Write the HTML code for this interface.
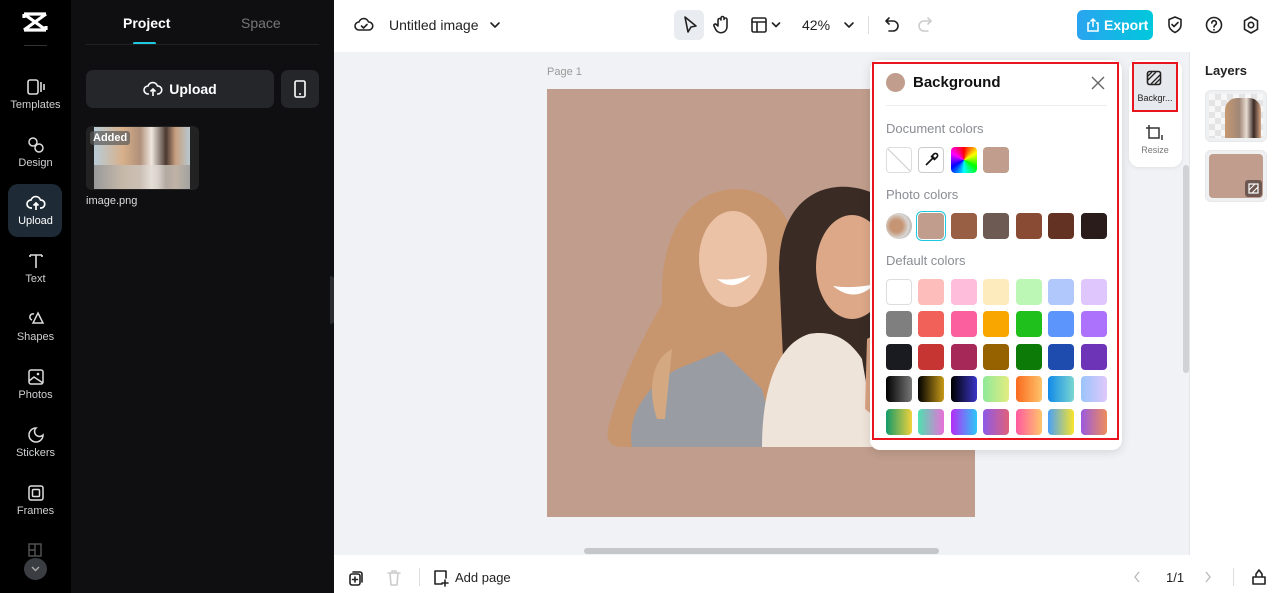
<!DOCTYPE html>
<html><head><meta charset="utf-8"><style>
*{box-sizing:border-box;margin:0;padding:0}
body{width:1280px;height:593px;overflow:hidden;font-family:"Liberation Sans",sans-serif;background:#fff;position:relative}
.abs{position:absolute}
.nav{left:0;top:0;width:71px;height:593px;background:#000}
.navi{position:absolute;left:0;width:71px;text-align:center;color:#cfd0d2;font-size:11px}
.navi svg{display:block;margin:0 auto 3px}
.panel{left:71px;top:0;width:263px;height:593px;background:#0f0f11}
.sw{position:absolute;width:26px;height:26px;border-radius:4px}
.ic{stroke:#222;fill:none;stroke-width:1.6;stroke-linecap:round;stroke-linejoin:round}
</style></head><body>
<div class="abs nav">
 <svg class="abs" style="left:22px;top:12px" width="26" height="20" viewBox="0 0 26 20"><path d="M2 2h22M2 18h22M2 2l22 16M24 2L2 18M2 2v4M24 14v4" stroke="#fff" stroke-width="3.2" fill="none"/></svg>
 <div class="abs" style="left:24px;top:45px;width:23px;height:1px;background:#333"></div>
 <div class="navi" style="top:78px"><svg width="20" height="18" viewBox="0 0 20 18"><rect x="2" y="2" width="10" height="14" rx="2" stroke="#ddd" stroke-width="1.6" fill="none"/><path d="M15 4v10M18 6v6" stroke="#ddd" stroke-width="1.6"/></svg>Templates</div>
 <div class="navi" style="top:136px"><svg width="20" height="18" viewBox="0 0 20 18"><circle cx="7" cy="6" r="4" stroke="#ddd" stroke-width="1.5" fill="none"/><circle cx="13" cy="12" r="4" stroke="#ddd" stroke-width="1.5" fill="none"/></svg>Design</div>
 <div class="abs" style="left:8px;top:184px;width:54px;height:53px;border-radius:10px;background:#1e2a36"></div>
 <div class="navi" style="top:194px;color:#fff"><svg width="20" height="18" viewBox="0 0 20 18"><path d="M6 14H5a4 4 0 010-8 5 5 0 019.5 0A4 4 0 0115 14h-1M10 9v7M7.5 11.5L10 9l2.5 2.5" stroke="#fff" stroke-width="1.7" fill="none"/></svg>Upload</div>
 <div class="navi" style="top:252px"><svg width="20" height="18" viewBox="0 0 20 18"><path d="M4 3h12M10 3v13M4 3v2M16 3v2" stroke="#ddd" stroke-width="1.6" fill="none"/></svg>Text</div>
 <div class="navi" style="top:310px"><svg width="20" height="18" viewBox="0 0 20 18"><path d="M8 4a3 3 0 10-2 6M12 3l5 10H7z" stroke="#ddd" stroke-width="1.5" fill="none"/></svg>Shapes</div>
 <div class="navi" style="top:368px"><svg width="20" height="18" viewBox="0 0 20 18"><rect x="3" y="2" width="14" height="14" rx="2" stroke="#ddd" stroke-width="1.5" fill="none"/><path d="M3 13l5-4 9 6" stroke="#ddd" stroke-width="1.5" fill="none"/><circle cx="12" cy="6" r="1.3" fill="#ddd"/></svg>Photos</div>
 <div class="navi" style="top:426px"><svg width="20" height="18" viewBox="0 0 20 18"><path d="M10 2a7 7 0 107 7 4 4 0 01-7-7z" stroke="#ddd" stroke-width="1.5" fill="none"/></svg>Stickers</div>
 <div class="navi" style="top:484px"><svg width="20" height="18" viewBox="0 0 20 18"><rect x="3" y="2" width="14" height="14" rx="2" stroke="#ddd" stroke-width="1.5" fill="none"/><rect x="6.5" y="5.5" width="7" height="7" rx="1" stroke="#ddd" stroke-width="1.5" fill="none"/></svg>Frames</div>
 <svg class="abs" style="left:28px;top:543px" width="14" height="14"><rect x="1" y="1" width="12" height="12" stroke="#555" stroke-width="1.4" fill="none"/><path d="M7 1v12M1 7h6" stroke="#555" stroke-width="1.4"/></svg>
 <div class="abs" style="left:24px;top:558px;width:23px;height:22px;border-radius:50%;background:#3a3d42"></div>
 <svg class="abs" style="left:30px;top:565px" width="11" height="8"><path d="M2 2l3.5 3.5L9 2" stroke="#aaa" stroke-width="1.4" fill="none"/></svg>
</div>
<div class="abs panel">
 <div class="abs" style="left:52px;top:15px;color:#fff;font-weight:bold;font-size:14px">Project</div>
 <div class="abs" style="left:170px;top:15px;color:#777;font-size:14px">Space</div>
 <div class="abs" style="left:62px;top:42px;width:23px;height:3px;background:#1ec8e0;border-radius:2px"></div>
 <div class="abs" style="left:15px;top:44px;width:233px;height:1px;background:#222"></div>
 <div class="abs" style="left:15px;top:70px;width:188px;height:38px;border-radius:7px;background:#25262a;color:#fff;font-weight:bold;font-size:14px;text-align:center;line-height:38px"><svg style="vertical-align:-4px;margin-right:6px" width="20" height="18" viewBox="0 0 20 18"><path d="M6 14H5a4 4 0 010-8 5 5 0 019.5 0A4 4 0 0115 14h-1M10 9v7M7.5 11.5L10 9l2.5 2.5" stroke="#fff" stroke-width="1.6" fill="none"/></svg>Upload</div>
 <div class="abs" style="left:210px;top:70px;width:38px;height:38px;border-radius:7px;background:#25262a"></div>
 <svg class="abs" style="left:222px;top:79px" width="14" height="20"><rect x="2" y="2" width="10" height="16" rx="1.5" stroke="#fff" stroke-width="1.6" fill="none"/><path d="M6 15h2" stroke="#fff" stroke-width="1.5"/></svg>
 <div class="abs" style="left:15px;top:126px;width:113px;height:64px;border-radius:6px;background:#222"></div>
 <div class="abs" style="left:23px;top:127px;width:96px;height:62px;background:linear-gradient(90deg,#b8ccd8,#d8b08a 30%,#b0907a 48%,#f0e8e0 60%,#4a3830 75%,#c8a080 85%,#b8c8d0);"></div>
 <div class="abs" style="left:23px;top:165px;width:96px;height:24px;background:linear-gradient(90deg,#8e8a86,#c5c0b8,#e8e2dc,#9a9690);opacity:.75"></div>
 <div class="abs" style="left:19px;top:131px;padding:1px 3px;border-radius:3px;background:rgba(90,90,90,.7);color:#fff;font-size:11px;font-weight:bold">Added</div>
 <div class="abs" style="left:15px;top:195px;color:#ddd;font-size:11px">image.png</div>
 <div class="abs" style="left:259px;top:276px;width:6px;height:48px;border-radius:0 6px 6px 0;background:#2a2b2e"></div>
</div>
<svg class="abs" style="left:354px;top:15px" width="20" height="20" viewBox="0 0 20 20"><path d="M6 15H5a4 4 0 010-8 5 5 0 019.5 0A4 4 0 0115 15H6zM7.5 11l2 2 3.5-3.5" class="ic"/></svg>
<div class="abs" style="left:389px;top:17px;font-size:14px;color:#222">Untitled image</div>
<svg class="abs" style="left:489px;top:20px" width="12" height="10"><path d="M2 3l4 4 4-4" class="ic"/></svg>
<div class="abs" style="left:674px;top:10px;width:30px;height:30px;border-radius:6px;background:#e9ecf0"></div>
<svg class="abs" style="left:681px;top:15px" width="18" height="20"><path d="M4 2l11 9-5 1-3 5z" class="ic"/></svg>
<svg class="abs" style="left:712px;top:14px" width="20" height="22"><path d="M6 11V6a1.5 1.5 0 013 0V4a1.5 1.5 0 013 0v1.5a1.5 1.5 0 013 0V13a6 6 0 01-11 3l-2-4a1.4 1.4 0 012.4-1.4L6 12" class="ic"/></svg>
<svg class="abs" style="left:750px;top:16px" width="18" height="18"><rect x="2" y="2" width="14" height="14" rx="1.5" class="ic"/><path d="M2 6h14M7 6v10" class="ic"/></svg>
<svg class="abs" style="left:771px;top:21px" width="10" height="8"><path d="M1.5 2l3.5 3.5L8.5 2" class="ic"/></svg>
<div class="abs" style="left:802px;top:17px;font-size:14px;color:#222">42%</div>
<svg class="abs" style="left:843px;top:20px" width="12" height="10"><path d="M2 3l4 4 4-4" class="ic"/></svg>
<div class="abs" style="left:868px;top:16px;width:1px;height:18px;background:#ddd"></div>
<svg class="abs" style="left:883px;top:15px" width="18" height="20"><path d="M6 3L3 6l3 3M3 6h7a5 5 0 010 10H6" class="ic"/></svg>
<svg class="abs" style="left:916px;top:15px" width="18" height="20"><path d="M12 3l3 3-3 3M15 6H8a5 5 0 000 10h4" class="ic" style="stroke:#ccc"/></svg>
<div class="abs" style="left:1077px;top:10px;width:76px;height:30px;border-radius:6px;background:linear-gradient(90deg,#2aa4f0,#00c8dc);color:#fff;font-weight:bold;font-size:14px;line-height:30px;padding-left:27px">Export</div>
<svg class="abs" style="left:1086px;top:17px" width="14" height="16"><path d="M4 6H2v8h10V6h-2M7 10V2M4.5 4.5L7 2l2.5 2.5" stroke="#fff" stroke-width="1.5" fill="none"/></svg>
<svg class="abs" style="left:1166px;top:15px" width="18" height="20"><path d="M9 2l6 2.5V10c0 4-3 6-6 7.5C6 16 3 14 3 10V4.5z M6 9.5l2 2 4-4" class="ic"/></svg>
<svg class="abs" style="left:1204px;top:15px" width="20" height="20"><circle cx="10" cy="10" r="7.5" class="ic"/><path d="M7.8 8a2.3 2.3 0 114 1.5c-1 .7-1.8 1.2-1.8 2.5" class="ic"/><circle cx="10" cy="14.8" r=".9" fill="#222"/></svg>
<svg class="abs" style="left:1241px;top:15px" width="20" height="20"><path d="M10 2l6.5 3.7v8.6L10 18l-6.5-3.7V5.7z" class="ic"/><circle cx="10" cy="10" r="2.7" class="ic"/></svg>
<div class="abs" style="left:334px;top:52px;width:855px;height:503px;background:#f0f2f5"></div>
<div class="abs" style="left:547px;top:66px;font-size:11px;color:#999">Page 1</div>
<div class="abs" style="left:547px;top:89px;width:428px;height:428px;background:#c09d8c;overflow:hidden">
 <svg width="428" height="428" viewBox="0 0 428 428">
  <path d="M75 358 C62 358 58 350 62 335 C75 290 95 250 115 215 C112 140 145 100 190 100 C225 100 248 130 248 165 L250 358 Z" fill="#c8966e"/>
  <path d="M85 358 C80 330 95 300 130 280 L175 262 L215 300 L230 358 Z" fill="#9a9ca4"/>
  <path d="M110 330 C100 300 105 270 125 260 L118 330 Z" fill="#d4a880"/>
  <ellipse cx="186" cy="170" rx="34" ry="48" fill="#ecc2a6"/>
  <path d="M170 190 q16 14 34 -4 q-16 6 -34 4z" fill="#fff"/>
  <path d="M232 180 C232 120 265 95 302 98 C350 102 382 150 384 215 L428 358 L240 358 Z" fill="#3a2b25"/>
  <ellipse cx="305" cy="178" rx="36" ry="52" fill="#dca888"/>
  <path d="M286 197 q22 18 42 -2 q-22 5 -42 2z" fill="#fff"/>
  <path d="M215 358 C215 300 230 255 262 245 C290 240 305 255 315 270 L330 358 Z" fill="#efe4da"/>
  <path d="M330 358 L340 300 C350 270 375 255 400 270 L428 300 L428 358 Z" fill="#ede2d8"/>
  <path d="M320 250 C345 235 372 248 370 290 L350 345 L318 320 Z" fill="#d9a383"/>
 </svg>
</div>
<div class="abs" style="left:584px;top:548px;width:355px;height:6px;border-radius:3px;background:#c4c6ca"></div>
<div class="abs" style="left:1183px;top:165px;width:6px;height:208px;border-radius:3px;background:#d0d2d6"></div>
<div class="abs" style="left:870px;top:60px;width:252px;height:390px;background:#fff;border-radius:10px;box-shadow:0 2px 10px rgba(0,0,0,.12)"></div>
<div class="abs" style="left:872px;top:62px;width:247px;height:378px;border:2px solid #e8141e"></div>
<div class="abs" style="left:886px;top:73px;width:19px;height:19px;border-radius:50%;background:#c09d8c"></div>
<div class="abs" style="left:913px;top:74px;font-weight:bold;font-size:15px;color:#111">Background</div>
<svg class="abs" style="left:1090px;top:75px" width="16" height="16"><path d="M2 2l12 12M14 2L2 14" stroke="#666" stroke-width="1.4"/></svg>
<div class="abs" style="left:886px;top:105px;width:221px;height:1px;background:#eee"></div>
<div class="abs" style="left:886px;top:121px;font-size:13px;color:#8a8d93">Document colors</div>
<div class="abs" style="left:886px;top:187px;font-size:13px;color:#8a8d93">Photo colors</div>
<div class="abs" style="left:886px;top:253px;font-size:13px;color:#8a8d93">Default colors</div>
<div class="sw" style="left:886px;top:147px;border:1px solid #ddd;background:linear-gradient(45deg,transparent 48%,#ccc 49%,#ccc 51%,transparent 52%)"></div>
<div class="sw" style="left:918px;top:147px;border:1px solid #ccc;background:#fff"></div>
<svg class="abs" style="left:923px;top:152px" width="16" height="16"><path d="M3 13l7-7M8 4l4 4M11 2a2 2 0 013 3l-2 2-3-3z" stroke="#111" stroke-width="1.6" fill="none"/></svg>
<div class="sw" style="left:951px;top:147px;background:conic-gradient(from 0deg,#f00,#ff0,#0f0,#0ff,#00f,#f0f,#f00)"></div>
<div class="sw" style="left:983px;top:147px;background:#c09d8c"></div>
<div class="sw" style="left:886px;top:213px;border-radius:50%;background:radial-gradient(circle at 40% 50%,#c59574 0 30%,#d8d6d4 60%,#9a8f88)"></div>
<div class="sw" style="left:918px;top:213px;background:#c09d8c;box-shadow:0 0 0 1px #fff,0 0 0 2px #1ec8e0"></div>
<div class="sw" style="left:951px;top:213px;background:#985f44"></div>
<div class="sw" style="left:983px;top:213px;background:#6d5a52"></div>
<div class="sw" style="left:1016px;top:213px;background:#8a4b34"></div>
<div class="sw" style="left:1048px;top:213px;background:#643222"></div>
<div class="sw" style="left:1081px;top:213px;background:#2a1c1a"></div>
<div class="sw" style="left:886px;top:279px;background:#fff;border:1px solid #ddd"></div>
<div class="sw" style="left:918px;top:279px;background:#fdbdbb"></div>
<div class="sw" style="left:951px;top:279px;background:#fdbddb"></div>
<div class="sw" style="left:983px;top:279px;background:#fdeabd"></div>
<div class="sw" style="left:1016px;top:279px;background:#bdf7b6"></div>
<div class="sw" style="left:1048px;top:279px;background:#b0c8fc"></div>
<div class="sw" style="left:1081px;top:279px;background:#dfc6fd"></div>
<div class="sw" style="left:886px;top:311px;background:#7f7f7f"></div>
<div class="sw" style="left:918px;top:311px;background:#f2605a"></div>
<div class="sw" style="left:951px;top:311px;background:#fb5f9d"></div>
<div class="sw" style="left:983px;top:311px;background:#f9a700"></div>
<div class="sw" style="left:1016px;top:311px;background:#1fbf1c"></div>
<div class="sw" style="left:1048px;top:311px;background:#5c95fb"></div>
<div class="sw" style="left:1081px;top:311px;background:#ad72fb"></div>
<div class="sw" style="left:886px;top:344px;background:#1a1b20"></div>
<div class="sw" style="left:918px;top:344px;background:#c63532"></div>
<div class="sw" style="left:951px;top:344px;background:#a62859"></div>
<div class="sw" style="left:983px;top:344px;background:#966200"></div>
<div class="sw" style="left:1016px;top:344px;background:#0c7a06"></div>
<div class="sw" style="left:1048px;top:344px;background:#1e4cae"></div>
<div class="sw" style="left:1081px;top:344px;background:#6e34b8"></div>
<div class="sw" style="left:886px;top:376px;background:linear-gradient(90deg,#000,#777)"></div>
<div class="sw" style="left:918px;top:376px;background:linear-gradient(90deg,#000,#c89a18)"></div>
<div class="sw" style="left:951px;top:376px;background:linear-gradient(90deg,#000,#3a35c8)"></div>
<div class="sw" style="left:983px;top:376px;background:linear-gradient(90deg,#8ee99a,#e4ec80)"></div>
<div class="sw" style="left:1016px;top:376px;background:linear-gradient(90deg,#fa6a1e,#fec36a)"></div>
<div class="sw" style="left:1048px;top:376px;background:linear-gradient(90deg,#128ae8,#7ad6d0)"></div>
<div class="sw" style="left:1081px;top:376px;background:linear-gradient(90deg,#9ac4fb,#e0c8fb)"></div>
<div class="sw" style="left:886px;top:409px;background:linear-gradient(90deg,#129a6a,#f1d23c)"></div>
<div class="sw" style="left:918px;top:409px;background:linear-gradient(90deg,#4ee0b0,#e870d8)"></div>
<div class="sw" style="left:951px;top:409px;background:linear-gradient(90deg,#b42cf6,#2cc8f8)"></div>
<div class="sw" style="left:983px;top:409px;background:linear-gradient(90deg,#8c5ae8,#e0607a)"></div>
<div class="sw" style="left:1016px;top:409px;background:linear-gradient(90deg,#ff5aa0,#ffc46a)"></div>
<div class="sw" style="left:1048px;top:409px;background:linear-gradient(90deg,#4aa0f8,#f8e42a)"></div>
<div class="sw" style="left:1081px;top:409px;background:linear-gradient(90deg,#9a5ae0,#ee8c5a)"></div>
<div class="abs" style="left:1129px;top:60px;width:53px;height:107px;background:#fff;border-radius:10px;box-shadow:0 1px 4px rgba(0,0,0,.08)"></div>
<div class="abs" style="left:1132px;top:62px;width:46px;height:50px;background:#e6e9ed;border:2px solid #e8141e"></div>
<svg class="abs" style="left:1146px;top:70px" width="16" height="16"><rect x="1.5" y="1.5" width="13" height="13" rx="2" stroke="#222" stroke-width="1.6" fill="none"/><path d="M2 10l8-8M5 14l9-9M2 6l4-4M9 14l5-5" stroke="#222" stroke-width="1.3"/></svg>
<div class="abs" style="left:1134px;top:93px;width:42px;text-align:center;font-size:9px;color:#222">Backgr...</div>
<svg class="abs" style="left:1146px;top:124px" width="18" height="16"><path d="M3 4h10v10H3zM3 1v3M0 4h3M13 14v-3M16 11v6" stroke="#333" stroke-width="1.5" fill="none"/></svg>
<div class="abs" style="left:1134px;top:145px;width:42px;text-align:center;font-size:9px;color:#777">Resize</div>
<div class="abs" style="left:1189px;top:52px;width:1px;height:503px;background:#e5e7ea"></div>
<div class="abs" style="left:1205px;top:63px;font-weight:bold;font-size:13px;color:#222">Layers</div>
<div class="abs" style="left:1205px;top:90px;width:62px;height:52px;border-radius:6px;background:#eef0f2;border:1px solid #e6e8ea"></div>
<div class="abs" style="left:1209px;top:94px;width:54px;height:44px;background:repeating-conic-gradient(#e4e4e4 0 25%,#f7f7f7 0 50%) 0 0/12px 12px"></div>
<div class="abs" style="left:1225px;top:98px;width:36px;height:40px;background:linear-gradient(90deg,#c69870,#a08878 40%,#e8dcd2 60%,#3a2a24 80%,#d6a888);border-radius:12px 12px 0 0"></div>
<div class="abs" style="left:1205px;top:150px;width:62px;height:52px;border-radius:6px;background:#eef0f2;border:1px solid #e6e8ea"></div>
<div class="abs" style="left:1209px;top:154px;width:54px;height:44px;border-radius:4px;background:#c09d8c"></div>
<div class="abs" style="left:1245px;top:180px;width:17px;height:17px;border-radius:3px;background:#6c5850"></div>
<svg class="abs" style="left:1248px;top:183px" width="11" height="11"><rect x="1" y="1" width="9" height="9" stroke="#fff" stroke-width="1.2" fill="none"/><path d="M1 7l6-6M4 10l6-6" stroke="#fff" stroke-width="1"/></svg>
<svg class="abs" style="left:347px;top:569px" width="18" height="18"><rect x="3" y="5" width="10" height="11" rx="2" class="ic"/><path d="M6 3h7a2 2 0 012 2v8M8 8v5M5.5 10.5h5" class="ic"/></svg>
<svg class="abs" style="left:386px;top:569px" width="16" height="18"><path d="M2 4h12M6 4V2h4v2M4 4l1 12h6l1-12" class="ic" style="stroke:#ccc"/></svg>
<div class="abs" style="left:419px;top:568px;width:1px;height:18px;background:#ddd"></div>
<svg class="abs" style="left:432px;top:568px" width="18" height="20"><path d="M10 16H3V3h11v7M13 12v6M10 15h6" class="ic"/></svg>
<div class="abs" style="left:455px;top:570px;font-size:13px;color:#222">Add page</div>
<svg class="abs" style="left:1132px;top:570px" width="10" height="14"><path d="M7 2L3 7l4 5" stroke="#bbb" stroke-width="1.4" fill="none"/></svg>
<div class="abs" style="left:1166px;top:570px;font-size:13px;color:#222">1/1</div>
<svg class="abs" style="left:1203px;top:570px" width="10" height="14"><path d="M3 2l4 5-4 5" stroke="#bbb" stroke-width="1.4" fill="none"/></svg>
<div class="abs" style="left:1233px;top:568px;width:1px;height:18px;background:#ddd"></div>
<svg class="abs" style="left:1250px;top:567px" width="18" height="20"><path d="M3 10h12v7H3zM6 10V7l3-4 3 4v3" class="ic"/></svg>
</body></html>
